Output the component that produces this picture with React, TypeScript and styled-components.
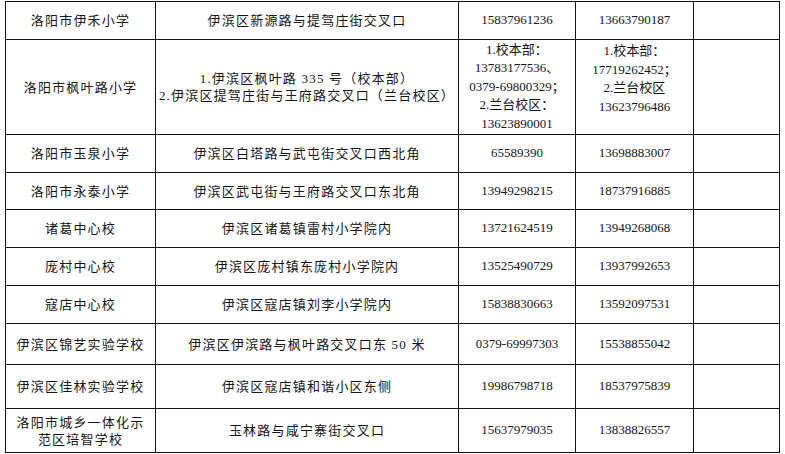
import styled, { createGlobalStyle } from "styled-components";

const GlobalStyle = createGlobalStyle`
  html, body {
    margin: 0;
    padding: 0;
    background: #fff;
  }
`;

const Page = styled.div`
  padding: 1px 0 0 5px;
`;

const Table = styled.table`
  border-collapse: collapse;
  table-layout: fixed;
  width: 775px;
  font-family: "Liberation Serif", "Noto Sans CJK SC", serif;
  font-size: 13px;
  color: #151515;
`;

const Col = styled.col<{ $w: number }>`
  width: ${({ $w }) => $w}px;
`;

const Row = styled.tr<{ $h: number }>`
  height: ${({ $h }) => $h}px;
`;

type Kind = "name" | "addr" | "tel" | "blank";

const Cell = styled.td<{ $kind: Kind; $top?: boolean }>`
  border: 1px solid #111;
  padding: ${({ $top }) => ($top ? "2px 2px 0" : "0 2px")};
  text-align: center;
  vertical-align: ${({ $top }) => ($top ? "top" : "middle")};
  white-space: nowrap;
  line-height: ${({ $kind }) => ($kind === "tel" ? "18.5px" : "17px")};
  letter-spacing: ${({ $kind }) =>
    $kind === "name" || $kind === "addr" ? "1.2px" : "0"};
`;

const colWidths = [150, 303, 117, 118, 86];

type School = {
  h: number;
  name: string[];
  addr: string[];
  tel1: string[];
  tel2: string[];
  tel2Top?: boolean;
};

const schools: School[] = [
  {
    h: 38,
    name: ["洛阳市伊禾小学"],
    addr: ["伊滨区新源路与提驾庄街交叉口"],
    tel1: ["15837961236"],
    tel2: ["13663790187"],
  },
  {
    h: 95,
    name: ["洛阳市枫叶路小学"],
    addr: ["1.伊滨区枫叶路 335 号（校本部）", "2.伊滨区提驾庄街与王府路交叉口（兰台校区）"],
    tel1: ["1.校本部：", "13783177536、", "0379-69800329；", "2.兰台校区：", "13623890001"],
    tel2: ["1.校本部：", "17719262452；", "2.兰台校区", "13623796486"],
    tel2Top: true,
  },
  {
    h: 38,
    name: ["洛阳市玉泉小学"],
    addr: ["伊滨区白塔路与武屯街交叉口西北角"],
    tel1: ["65589390"],
    tel2: ["13698883007"],
  },
  {
    h: 37,
    name: ["洛阳市永泰小学"],
    addr: ["伊滨区武屯街与王府路交叉口东北角"],
    tel1: ["13949298215"],
    tel2: ["18737916885"],
  },
  {
    h: 38,
    name: ["诸葛中心校"],
    addr: ["伊滨区诸葛镇雷村小学院内"],
    tel1: ["13721624519"],
    tel2: ["13949268068"],
  },
  {
    h: 38,
    name: ["庞村中心校"],
    addr: ["伊滨区庞村镇东庞村小学院内"],
    tel1: ["13525490729"],
    tel2: ["13937992653"],
  },
  {
    h: 38,
    name: ["寇店中心校"],
    addr: ["伊滨区寇店镇刘李小学院内"],
    tel1: ["15838830663"],
    tel2: ["13592097531"],
  },
  {
    h: 41,
    name: ["伊滨区锦艺实验学校"],
    addr: ["伊滨区伊滨路与枫叶路交叉口东 50 米"],
    tel1: ["0379-69997303"],
    tel2: ["15538855042"],
  },
  {
    h: 44,
    name: ["伊滨区佳林实验学校"],
    addr: ["伊滨区寇店镇和谐小区东侧"],
    tel1: ["19986798718"],
    tel2: ["18537975839"],
  },
  {
    h: 44,
    name: ["洛阳市城乡一体化示", "范区培智学校"],
    addr: ["玉林路与咸宁寨街交叉口"],
    tel1: ["15637979035"],
    tel2: ["13838826557"],
  },
];

function Lines({ lines }: { lines: string[] }) {
  return (
    <>
      {lines.map((line, i) => (
        <span key={i}>
          {i > 0 && <br />}
          {line}
        </span>
      ))}
    </>
  );
}

export default function App() {
  return (
    <>
      <GlobalStyle />
      <Page>
        <Table>
          <colgroup>
            {colWidths.map((w, i) => (
              <Col key={i} $w={w} />
            ))}
          </colgroup>
          <tbody>
            {schools.map((s) => (
              <Row key={s.name.join("")} $h={s.h}>
                <Cell $kind="name">
                  <Lines lines={s.name} />
                </Cell>
                <Cell $kind="addr">
                  <Lines lines={s.addr} />
                </Cell>
                <Cell $kind="tel">
                  <Lines lines={s.tel1} />
                </Cell>
                <Cell $kind="tel" $top={s.tel2Top}>
                  <Lines lines={s.tel2} />
                </Cell>
                <Cell $kind="blank" />
              </Row>
            ))}
          </tbody>
        </Table>
      </Page>
    </>
  );
}
